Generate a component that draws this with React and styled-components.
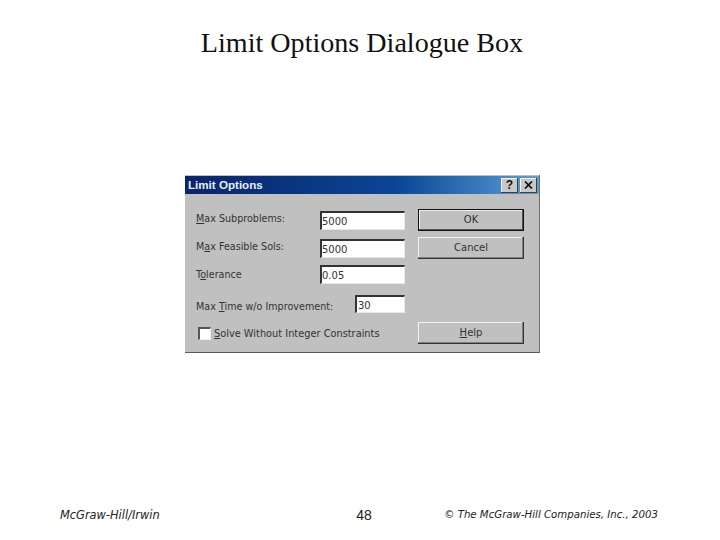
import React from 'react';
import styled, { createGlobalStyle } from 'styled-components';

const GlobalStyle = createGlobalStyle`
  html, body {
    margin: 0;
    padding: 0;
    background: #fff;
  }
`;

const Slide = styled.div`
  width: 720px;
  height: 540px;
  display: flex;
  flex-direction: column;
  align-items: center;
  overflow: hidden;
  background: #fff;
`;

const Title = styled.h1`
  margin: 25px 0 0 4px;
  height: 36px;
  font: 400 28.1px/36px "Liberation Serif", serif;
  color: #111;
`;

const Dialog = styled.div`
  width: 355px;
  height: 178px;
  margin: 114px 0 0 5px;
  padding: 1px 0 0;
  box-sizing: border-box;
  display: flex;
  flex-direction: column;
  background: #c0c0c0;
  border-right: 1px solid #6f6f6f;
  border-bottom: 1px solid #5a5a5a;
  font-family: "DejaVu Sans", sans-serif;
  color: #222;
`;

const TitleBar = styled.div`
  height: 18px;
  display: flex;
  align-items: center;
  justify-content: space-between;
  padding: 0 2px 0 3px;
  background: linear-gradient(90deg, #0a246a 0%, #0a4696 60%, #5a9fd8 100%);
  color: #e8eef8;
  font: 700 11.6px "Liberation Sans", sans-serif;
`;

const TitleText = styled.span`
  margin-top: -2px;
`;

const TitleButtons = styled.div`
  display: flex;
  gap: 2px;
`;

const TitleButton = styled.div`
  width: 17px;
  height: 15px;
  display: flex;
  align-items: center;
  justify-content: center;
  background: #c8c8c8;
  box-shadow: inset -1px -1px 0 #404040, inset 1px 1px 0 #f4f4f4;
  color: #111;
  font: 700 12px "Liberation Sans", sans-serif;
`;

const Body = styled.div`
  flex: 1;
  display: flex;
  padding: 15px 15px 0 11px;
  justify-content: space-between;
`;

const Fields = styled.div`
  width: 209px;
  display: flex;
  flex-direction: column;
`;

const Row = styled.div`
  height: 19px;
  margin-top: ${(p) => p.$gap || 0}px;
  display: flex;
  align-items: center;
  justify-content: space-between;
  font-size: 9.6px;
  color: #333;
`;

const Label = styled.span`
  position: relative;
  top: ${(p) => p.$shift || 0}px;
  u {
    text-underline-offset: 1px;
  }
`;

const Input = styled.div`
  width: ${(p) => p.$w}px;
  height: ${(p) => p.$h || 19}px;
  box-sizing: border-box;
  padding: 2px 0 0 ${(p) => p.$pad ?? 0}px;
  background: #fff;
  border: 1px solid #e8e8e8;
  border-top: 2px solid #333;
  border-left: 2px solid #333;
  font-size: 10px;
  line-height: 14px;
  color: #333;
`;

const CheckRow = styled.div`
  margin: 14px 0 0 2px;
  display: flex;
  align-items: center;
  gap: 3px;
  font-size: 9.8px;
  color: #333;
  white-space: nowrap;
`;

const CheckBox = styled.div`
  width: 13px;
  height: 13px;
  box-sizing: border-box;
  background: #fff;
  border: 1px solid #eee;
  border-top: 2px solid #555;
  border-left: 2px solid #555;
`;

const Buttons = styled.div`
  width: 106px;
  display: flex;
  flex-direction: column;
`;

const Button = styled.div`
  height: ${(p) => p.$h || 22}px;
  margin-top: ${(p) => p.$gap || 0}px;
  padding-bottom: 2px;
  box-sizing: border-box;
  display: flex;
  align-items: center;
  justify-content: center;
  background: #c0c0c0;
  font-size: 10px;
  color: #333;
  box-shadow: ${(p) =>
    p.$primary
      ? 'inset 0 0 0 1px #111, inset -2px -2px 0 #555, inset 2px 2px 0 #eee'
      : 'inset -1px -1px 0 #333, inset -2px -2px 0 #808080, inset 1px 1px 0 #f2f2f2'};
`;

const Footer = styled.div`
  margin-top: auto;
  width: 100%;
  height: 34px;
  box-sizing: border-box;
  padding: 0 62px 0 60px;
  display: flex;
  align-items: flex-start;
  color: #222;
`;

const FooterSide = styled.div`
  flex: 1;
  padding-top: ${(p) => p.$top || 0}px;
  text-align: ${(p) => p.$align || 'left'};
  font: italic 400 ${(p) => p.$size || 10.5}px/14px "DejaVu Sans", sans-serif;
  white-space: nowrap;
`;

const PageNumber = styled.div`
  width: 30px;
  margin-left: 10px;
  text-align: center;
  font: 400 14px/16px "Liberation Sans", sans-serif;
  padding-top: 1px;
`;

export default function App() {
  return (
    <Slide>
      <GlobalStyle />
      <Title>Limit Options Dialogue Box</Title>
      <Dialog>
        <TitleBar>
          <TitleText>Limit Options</TitleText>
          <TitleButtons>
            <TitleButton>?</TitleButton>
            <TitleButton>
              <svg width="9" height="8" viewBox="0 0 9 8">
                <path d="M1 0.5 L8 7.5 M8 0.5 L1 7.5" stroke="#111" strokeWidth="1.7" fill="none" />
              </svg>
            </TitleButton>
          </TitleButtons>
        </TitleBar>
        <Body>
          <Fields>
            <Row $gap={2}>
              <Label $shift={-2}><u>M</u>ax Subproblems:</Label>
              <Input $w={85}>5000</Input>
            </Row>
            <Row $gap={9}>
              <Label $shift={-2}>M<u>a</u>x Feasible Sols:</Label>
              <Input $w={85}>5000</Input>
            </Row>
            <Row $gap={7}>
              <Label>T<u>o</u>lerance</Label>
              <Input $w={85}>0.05</Input>
            </Row>
            <Row $gap={10}>
              <Label $shift={3}>Max <u>T</u>ime w/o Improvement:</Label>
              <Input $w={50} $h={18} $pad={1}>30</Input>
            </Row>
            <CheckRow>
              <CheckBox />
              <span><u>S</u>olve Without Integer Constraints</span>
            </CheckRow>
          </Fields>
          <Buttons>
            <Button $primary>OK</Button>
            <Button $gap={6}>Cancel</Button>
            <Button $gap={63}><span><u>H</u>elp</span></Button>
          </Buttons>
        </Body>
      </Dialog>
      <Footer>
        <FooterSide $top={2} $size={11.4}>McGraw-Hill/Irwin</FooterSide>
        <PageNumber>48</PageNumber>
        <FooterSide $top={2} $size={10.2} $align="right">© The McGraw-Hill Companies, Inc., 2003</FooterSide>
      </Footer>
    </Slide>
  );
}
